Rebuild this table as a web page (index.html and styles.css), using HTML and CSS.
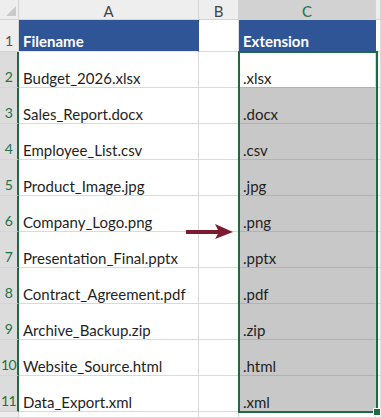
FILE: index.html
```html
<!DOCTYPE html>
<html>
<head>
<meta charset="utf-8">
<link rel="stylesheet" href="styles.css">
</head>
<body>
<div class="sheet">
  <div class="corner"><svg width="19" height="20" viewBox="0 0 19 20"><polygon points="6,16 16,6 16,16" fill="#c9c9c9"/></svg></div>
  <div class="colhead">A</div>
  <div class="colhead">B</div>
  <div class="colhead sel">C</div>
  <div class="colhead fill"></div>

  <div class="rowhead">1</div>
  <div class="cell hdr">Filename</div>
  <div class="cell"></div>
  <div class="cell hdr">Extension</div>
  <div class="cell fill"></div>

  <div class="rowhead sel">2</div>
  <div class="cell">Budget_2026.xlsx</div>
  <div class="cell"></div>
  <div class="cell active">.xlsx</div>
  <div class="cell fill"></div>

  <div class="rowhead sel">3</div>
  <div class="cell">Sales_Report.docx</div>
  <div class="cell"></div>
  <div class="cell ext">.docx</div>
  <div class="cell fill"></div>

  <div class="rowhead sel">4</div>
  <div class="cell">Employee_List.csv</div>
  <div class="cell"></div>
  <div class="cell ext">.csv</div>
  <div class="cell fill"></div>

  <div class="rowhead sel">5</div>
  <div class="cell">Product_Image.jpg</div>
  <div class="cell"></div>
  <div class="cell ext">.jpg</div>
  <div class="cell fill"></div>

  <div class="rowhead sel">6</div>
  <div class="cell">Company_Logo.png</div>
  <div class="cell"></div>
  <div class="cell ext">.png</div>
  <div class="cell fill"></div>

  <div class="rowhead sel">7</div>
  <div class="cell">Presentation_Final.pptx</div>
  <div class="cell"></div>
  <div class="cell ext">.pptx</div>
  <div class="cell fill"></div>

  <div class="rowhead sel">8</div>
  <div class="cell">Contract_Agreement.pdf</div>
  <div class="cell"></div>
  <div class="cell ext">.pdf</div>
  <div class="cell fill"></div>

  <div class="rowhead sel">9</div>
  <div class="cell">Archive_Backup.zip</div>
  <div class="cell"></div>
  <div class="cell ext">.zip</div>
  <div class="cell fill"></div>

  <div class="rowhead sel">10</div>
  <div class="cell">Website_Source.html</div>
  <div class="cell"></div>
  <div class="cell ext">.html</div>
  <div class="cell fill"></div>

  <div class="rowhead sel">11</div>
  <div class="cell">Data_Export.xml</div>
  <div class="cell"></div>
  <div class="cell ext">.xml</div>
  <div class="cell fill"></div>

  <div class="rowhead"></div>
  <div class="cell"></div>
  <div class="cell"></div>
  <div class="cell"></div>
  <div class="cell fill"></div>

  <div class="selection"><span class="handle"></span></div>

  <svg class="arrow" width="49" height="16" viewBox="0 0 49 16">
    <rect x="0" y="6" width="34" height="4" fill="#7b1a30"/>
    <polygon points="29,0 47,8 29,15 33,8" fill="#7b1a30"/>
  </svg>
</div>
</body>
</html>
```

FILE: styles.css
```css
html, body {
  margin: 0;
  padding: 0;
  background: #ffffff;
}

.sheet {
  position: relative;
  display: grid;
  grid-template-columns: 19px 180px 40px 137px 1fr;
  grid-template-rows: 20px 32px repeat(10, 36px) 1fr;
  width: 381px;
  height: 418px;
  overflow: hidden;
  font-family: Lato, "Open Sans", sans-serif;
}

.corner {
  background: #eeeeee;
  border-right: 1px solid #d4d4d4;
  border-bottom: 1px solid #d4d4d4;
  box-sizing: border-box;
}
.corner svg { display: block; }

.colhead {
  background: #eeeeee;
  border-right: 1px solid #d4d4d4;
  border-bottom: 1px solid #d4d4d4;
  box-sizing: border-box;
  color: #444444;
  font-size: 15px;
  display: flex;
  align-items: center;
  justify-content: center;
  padding-top: 2px;
}
.colhead.sel {
  background: #d2d2d2;
  color: #217346;
}

.rowhead {
  background: #eeeeee;
  border-right: 1px solid #d4d4d4;
  border-bottom: 1px solid #d4d4d4;
  box-sizing: border-box;
  color: #555555;
  font-size: 14px;
  display: flex;
  align-items: flex-end;
  justify-content: center;
  padding-bottom: 2px;
  line-height: 16px;
}
.rowhead.sel {
  background: #dcdcdc;
  color: #217346;
  border-right: 2px solid #1e6b41;
  letter-spacing: -0.5px;
}

.cell {
  border-right: 1px solid #dadada;
  border-bottom: 1px solid #dadada;
  box-sizing: border-box;
  font-size: 15px;
  color: #1f1f1f;
  display: flex;
  align-items: flex-end;
  padding: 0 0 0 4px;
  line-height: 18px;
  white-space: nowrap;
}
.cell.hdr {
  background: #2f5597;
  color: #ffffff;
  font-weight: 700;
  border-right-color: #2f5597;
  border-bottom-color: #e6e6e6;
  padding-bottom: 1px;
}
.cell.ext {
  background: #c8c8c8;
  border-right-color: #c8c8c8;
  border-bottom-color: #b2b2b2;
}
.cell.active {
  background: #ffffff;
  border-bottom-color: #b2b2b2;
}
.cell.fill { padding: 0; }

.selection {
  position: absolute;
  left: 238px;
  top: 51px;
  width: 140px;
  height: 362px;
  box-sizing: border-box;
  border: 2px solid #1e6b41;
  pointer-events: none;
}
.handle {
  position: absolute;
  right: -5px;
  bottom: -5px;
  width: 6px;
  height: 6px;
  background: #1e6b41;
  border: 1px solid #ffffff;
}

.arrow {
  position: absolute;
  left: 186px;
  top: 224px;
}
```
